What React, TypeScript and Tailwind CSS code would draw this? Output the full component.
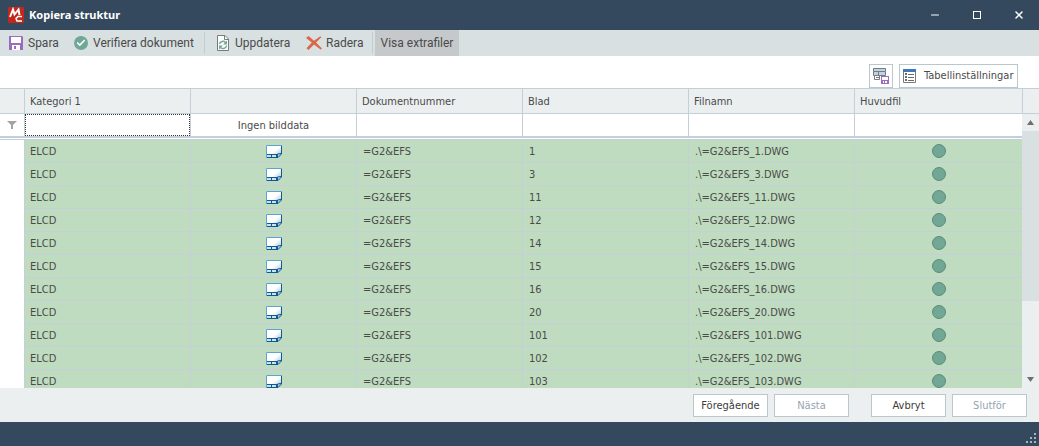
import React from 'react';
import { Check, Minus, X } from 'lucide-react';

const rows = ['1', '3', '11', '12', '14', '15', '16', '20', '101', '102', '103'];
const columns = ['Kategori 1', '', 'Dokumentnummer', 'Blad', 'Filnamn', 'Huvudfil'];

const cell = 'border-r border-b border-[#c3d0d8] px-[6px] pt-[2px] pb-0';

function AppLogo() {
  return (
    <svg className="h-4 w-4" viewBox="0 0 16 16" fill="none">
      <rect width="16" height="16" rx="1" fill="#c3271b" />
      <path d="M2 10L5 2.500l1.500 5L10.500 2.500 11.500 8" stroke="#fff" strokeWidth="2" />
      <path d="M14 9.500H10L8 11.500l1 2.500h5" stroke="#fff" strokeWidth="1.500" />
    </svg>
  );
}

function SaveIcon() {
  return (
    <svg className="h-[14px] w-[14px]" viewBox="0 0 14 14">
      <path d="M0 0h13l1 1v13H0z" fill="#9b6bc0" />
      <path d="M2 1h10v6H2zM3 9h8v5H3z" fill="#fff" />
      <path d="M5 10h2v3H5z" fill="#9b6bc0" />
    </svg>
  );
}

function RefreshDocIcon() {
  return (
    <svg className="h-4 w-3" viewBox="0 0 12 16" fill="none">
      <path d="M.5 .5h7.500l3.500 3.500v11.500H.5z" fill="#fff" stroke="#7a7a7a" />
      <path d="M7.500 .5v4h4" stroke="#7a7a7a" />
      <path d="M2.500 9a3.500 3.500 0 0 1 6-1.500M9.500 10.500a3.500 3.500 0 0 1-6 2" stroke="#6fa896" strokeWidth="1.500" />
      <path d="M10 5.500v4H6zM2 14.500v-4h4z" fill="#6fa896" />
    </svg>
  );
}

function DeleteIcon() {
  return (
    <svg className="h-[14px] w-4" viewBox="0 0 16 14">
      <path d="M0 2L2.500 0 8 4.700 14 .4 15.600 1 10 6.500 16 12.500 14.500 13.500 8 8.500 2.500 14 .5 12.300 5.800 6.500z" fill="#dc6748" />
    </svg>
  );
}

function TableSaveIcon() {
  return (
    <svg className="h-4 w-4 shrink-0" viewBox="0 0 16 16" fill="none">
      <path d="M.5 .5h12v3H.5z" fill="#bcd3e8" stroke="#7a7a7a" />
      <path d="M.5 3.500h12v4H.5zM5.500 3.500v4" fill="#bcd3e8" stroke="#7a7a7a" />
      <path d="M1.500 7.500h5v4h-5z" fill="#fff" stroke="#7a7a7a" />
      <path d="M3 9.500h3" stroke="#7a7a7a" />
      <path d="M8 8h8v8H8z" fill="#9b6bc0" />
      <path d="M9 9h6v3H9zM10 13h4v2h-4z" fill="#fff" />
      <path d="M11 13h1v2h-1z" fill="#9b6bc0" />
    </svg>
  );
}

function TableSettingsIcon() {
  return (
    <svg className="h-[14px] w-[13px]" viewBox="0 0 13 14" fill="none">
      <path d="M.5 1v12.500h12V1" fill="#fff" stroke="#7a7a7a" />
      <path d="M0 0h13v3H0z" fill="#3f78b8" />
      <path d="M2 4h2v2H2zM2 7h2v2H2zM2 10h2v2H2z" fill="#6a6a6a" />
      <path d="M5 5.500h6M5 8.500h6M5 11.500h6" stroke="#6a6a6a" />
    </svg>
  );
}

function SheetIcon() {
  return (
    <svg className="mx-auto block h-[13px] w-4" viewBox="0 0 16 13" fill="none">
      <defs>
        <linearGradient id="sheet" x1="0" y1="0" x2="1" y2="1">
          <stop offset=".5" stopColor="#fff" />
          <stop offset="1" stopColor="#8fb0c2" />
        </linearGradient>
      </defs>
      <path d="M0 0h16v9l-4 4H0z" fill="url(#sheet)" />
      <path d="M1 10h10v2H1z" fill="#cfe0ea" />
      <path d="M.5 13V.5H16" stroke="#5ba3d9" />
      <path d="M15.500 1v8L12 12.500H1M1 9.500h11M5.500 9.500v3M10.500 9.500v3M11.500 12V9l3.500-.5" stroke="#0d5a94" />
    </svg>
  );
}

function FilterIcon() {
  return (
    <svg className="mx-auto block h-2 w-[10px]" viewBox="0 0 10 8" fill="#a3a3a3">
      <path d="M0 0h10L6 4v4H4V4z" />
    </svg>
  );
}

function Toolbar() {
  return (
    <div className="flex h-[26px] shrink-0 items-stretch bg-[#d8e0e1] font-[Roboto,sans-serif] text-xs text-[#4a4a4a]">
      <button className="flex w-16 items-center gap-[5px] pl-[9px]">
        <SaveIcon />
        Spara
      </button>
      <button className="flex w-[140px] items-center gap-[5px] pl-[10px]">
        <span className="flex h-[14px] w-[14px] items-center justify-center rounded-full bg-[#6fa896]">
          <Check className="h-[10px] w-[10px] text-white" strokeWidth={4} />
        </span>
        Verifiera dokument
      </button>
      <div className="my-[2px] w-px bg-[#c1ced2]" />
      <button className="flex w-[91px] items-center gap-[6px] pl-3">
        <RefreshDocIcon />
        Uppdatera
      </button>
      <button className="flex w-[76px] items-center gap-1 pl-[10px]">
        <DeleteIcon />
        Radera
      </button>
      <div className="my-[2px] w-px bg-[#c1ced2]" />
      <button className="ml-[2px] w-[84px] bg-[#c5c9cb]">Visa extrafiler</button>
    </div>
  );
}

function StructureTable() {
  return (
    <table className="w-full table-fixed border-separate border-spacing-0 text-left">
      <thead>
        <tr className="h-[26px] bg-[#ebeff0]">
          <th className="w-[25px] border-y border-r border-[#c3d0d8]" />
          {columns.map((name, i) => (
            <th
              key={i}
              className="border-y border-r border-[#c3d0d8] px-[5px] pt-[2px] pb-0 font-normal last:w-[167px] last:border-r-0"
            >
              {name}
            </th>
          ))}
        </tr>
      </thead>
      <tbody>
        <tr className="h-[22px]">
          <td className="border-r border-[#c3d0d8] p-0">
            <FilterIcon />
          </td>
          <td className="border-r border-[#c3d0d8] p-0">
            <input
              aria-label="Filtrera Kategori 1"
              className="block h-[22px] w-full border border-dotted border-[#333] bg-white px-1 outline-none"
            />
          </td>
          <td className="border-r border-[#c3d0d8] pt-[2px] text-center">Ingen bilddata</td>
          <td className="border-r border-[#c3d0d8] p-0" />
          <td className="border-r border-[#c3d0d8] p-0" />
          <td className="border-r border-[#c3d0d8] p-0" />
          <td className="p-0" />
        </tr>
        <tr>
          <td colSpan={7} className="h-1 border-t-2 border-b border-[#c3d0d8] p-0" />
        </tr>
        {rows.map((sheet) => (
          <tr key={sheet} className="h-[23px] bg-[#c0dcc0]">
            <td className="border-r border-[#c3d0d8] bg-white p-0" />
            <td className="border-r border-b border-[#c3d0d8] px-[5px] pt-[2px] pb-0">ELCD</td>
            <td className="border-r border-b border-[#c3d0d8] p-0">
              <SheetIcon />
            </td>
            <td className={cell}>=G2&amp;EFS</td>
            <td className={cell}>{sheet}</td>
            <td className={cell}>.\=G2&amp;EFS_{sheet}.DWG</td>
            <td className="border-b border-[#c3d0d8] p-0">
              <div className="mx-auto h-[14px] w-[14px] rounded-full border border-[#5c8a7c] bg-[#72a796]" />
            </td>
          </tr>
        ))}
      </tbody>
    </table>
  );
}

function ScrollBar() {
  return (
    <div className="flex w-[17px] shrink-0 flex-col bg-[#ebeff0]">
      <div className="h-[26px] shrink-0 border-y border-l border-[#c3d0d8]" />
      <div className="flex h-[17px] shrink-0 items-center justify-center">
        <svg className="h-[5px] w-[7px]" viewBox="0 0 7 5" fill="#6e6e6e">
          <path d="M0 5L3.500 0 7 5z" />
        </svg>
      </div>
      <div className="min-h-0 flex-1">
        <div className="h-[71%] bg-[#d8e0e1]" />
      </div>
      <div className="flex h-[17px] shrink-0 items-center justify-center">
        <svg className="h-[5px] w-[7px]" viewBox="0 0 7 5" fill="#6e6e6e">
          <path d="M0 0h7L3.500 5z" />
        </svg>
      </div>
    </div>
  );
}

function FooterButton({ children, disabled }: { children: React.ReactNode; disabled?: boolean }) {
  return (
    <button
      disabled={disabled}
      className="h-[23px] w-[75px] border border-[#b9c8cc] bg-white pt-[2px] text-[#3c3c3c] disabled:text-[#95a3b3]"
    >
      {children}
    </button>
  );
}

export default function App() {
  return (
    <div className="flex h-screen flex-col bg-white font-['DejaVu_Sans_Condensed','DejaVu_Sans',sans-serif] text-[11px] leading-4 text-[#4a4a4a]">
      <header className="flex h-[30px] shrink-0 items-center bg-[#34495e] pl-2 font-['Noto_Sans',sans-serif] text-white">
        <AppLogo />
        <h1 className="ml-[5px] flex-1 text-[11px] font-bold">Kopiera struktur</h1>
        <button aria-label="Minimera" className="flex h-full w-[42px] items-center justify-center">
          <Minus className="h-3 w-3" strokeWidth={2} />
        </button>
        <button aria-label="Maximera" className="flex h-full w-[42px] items-center justify-center">
          <span className="h-2 w-2 border border-white" />
        </button>
        <button aria-label="Stäng" className="flex h-full w-[41px] items-center justify-center">
          <X className="h-3 w-3" strokeWidth={3} />
        </button>
      </header>
      <Toolbar />

      <div className="flex h-8 shrink-0 items-end justify-end gap-[6px] pr-[21px]">
        <button aria-label="Spara tabell" className="flex h-6 w-6 items-center justify-center border border-[#b9c8cc]">
          <TableSaveIcon />
        </button>
        <button className="flex h-6 w-[119px] items-center gap-2 border border-[#b9c8cc] pl-[3px]">
          <TableSettingsIcon />
          Tabellinställningar
        </button>
      </div>

      <main className="flex min-h-0 flex-1">
        <div className="min-w-0 flex-1 overflow-hidden">
          <StructureTable />
        </div>
        <ScrollBar />
      </main>

      <div className="flex h-[34px] shrink-0 items-center justify-end gap-[22px] bg-[#ebeff0] pr-3">
        <div className="flex gap-[6px]">
          <FooterButton>Föregående</FooterButton>
          <FooterButton disabled>Nästa</FooterButton>
        </div>
        <div className="flex gap-[6px]">
          <FooterButton>Avbryt</FooterButton>
          <FooterButton disabled>Slutför</FooterButton>
        </div>
      </div>

      <footer className="flex h-6 shrink-0 items-end justify-end bg-[#34495e] pr-[3px] pb-[3px]">
        <svg className="h-[10px] w-[10px]" viewBox="0 0 10 10" fill="#a5b5bb">
          <path d="M8 0h2v2H8zM4 4h2v2H4zM8 4h2v2H8zM0 8h2v2H0zM4 8h2v2H4zM8 8h2v2H8z" />
        </svg>
      </footer>
    </div>
  );
}
